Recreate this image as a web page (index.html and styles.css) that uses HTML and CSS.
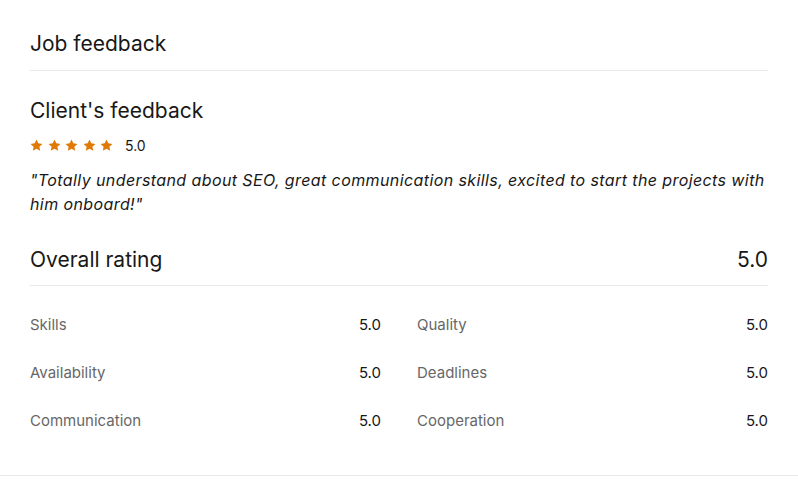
FILE: index.html
```html
<!DOCTYPE html>
<html lang="en">
<head>
  <meta charset="UTF-8">
  <title>Job feedback</title>
  <link rel="stylesheet" href="styles.css">
</head>
<body>

  <section class="feedback">
    <h2 class="feedback-title">Job feedback</h2>

    <h3 class="client-title">Client's feedback</h3>
    <div class="stars-row">
      <span class="stars">
        <svg viewBox="0 0 14 14"><path d="M7 0.6l1.95 4.1 4.45.55-3.28 3.08.84 4.42L7 10.6l-3.96 2.15.84-4.42L.6 5.25l4.45-.55z"/></svg>
        <svg viewBox="0 0 14 14"><path d="M7 0.6l1.95 4.1 4.45.55-3.28 3.08.84 4.42L7 10.6l-3.96 2.15.84-4.42L.6 5.25l4.45-.55z"/></svg>
        <svg viewBox="0 0 14 14"><path d="M7 0.6l1.95 4.1 4.45.55-3.28 3.08.84 4.42L7 10.6l-3.96 2.15.84-4.42L.6 5.25l4.45-.55z"/></svg>
        <svg viewBox="0 0 14 14"><path d="M7 0.6l1.95 4.1 4.45.55-3.28 3.08.84 4.42L7 10.6l-3.96 2.15.84-4.42L.6 5.25l4.45-.55z"/></svg>
        <svg viewBox="0 0 14 14"><path d="M7 0.6l1.95 4.1 4.45.55-3.28 3.08.84 4.42L7 10.6l-3.96 2.15.84-4.42L.6 5.25l4.45-.55z"/></svg>
      </span>
      <span class="stars-score">5.0</span>
    </div>
    <p class="quote">"Totally understand about SEO, great communication skills, excited to start the projects with him onboard!"</p>

    <div class="overall">
      <span>Overall rating</span>
      <span>5.0</span>
    </div>

    <div class="ratings">
      <div class="rating"><span class="rating-label">Skills</span><span>5.0</span></div>
      <div class="rating"><span class="rating-label">Quality</span><span>5.0</span></div>
      <div class="rating"><span class="rating-label">Availability</span><span>5.0</span></div>
      <div class="rating"><span class="rating-label">Deadlines</span><span>5.0</span></div>
      <div class="rating"><span class="rating-label">Communication</span><span>5.0</span></div>
      <div class="rating"><span class="rating-label">Cooperation</span><span>5.0</span></div>
    </div>
  </section>

</body>
</html>
```

FILE: styles.css
```css
body {
  margin: 0;
  font-family: 'Inter', 'Liberation Sans', sans-serif;
  color: #181818;
  background-color: #fff;
}

.feedback {
  padding: 0 30px 42px;
  border-bottom: 1px solid #e9e9e9;
}

.feedback-title {
  margin: 0;
  padding: 30px 0 12px;
  font-size: 21px;
  line-height: 28px;
  font-weight: 400;
  border-bottom: 1px solid #e9e9e9;
}

.client-title {
  margin: 26px 0 0;
  font-size: 21px;
  line-height: 28px;
  font-weight: 400;
}

.stars-row {
  display: flex;
  align-items: center;
  gap: 12px;
  height: 20px;
  margin-top: 10px;
}

.stars {
  display: flex;
  gap: 4.5px;
}

.stars svg {
  width: 13px;
  height: 13px;
  fill: #e07a06;
}

.stars-score {
  font-size: 14px;
}

.quote {
  margin: 13px 0 0;
  font-size: 16px;
  line-height: 24px;
  letter-spacing: 0.4px;
  font-style: italic;
}

.overall {
  display: flex;
  justify-content: space-between;
  margin-top: 30px;
  padding-bottom: 11px;
  font-size: 21px;
  line-height: 28px;
  border-bottom: 1px solid #e9e9e9;
}

.ratings {
  display: grid;
  grid-template-columns: 1fr 1fr;
  column-gap: 36px;
  row-gap: 24px;
  margin-top: 27px;
}

.rating {
  display: flex;
  justify-content: space-between;
  font-size: 15px;
  line-height: 24px;
}

.rating-label {
  color: #676767;
}
```
